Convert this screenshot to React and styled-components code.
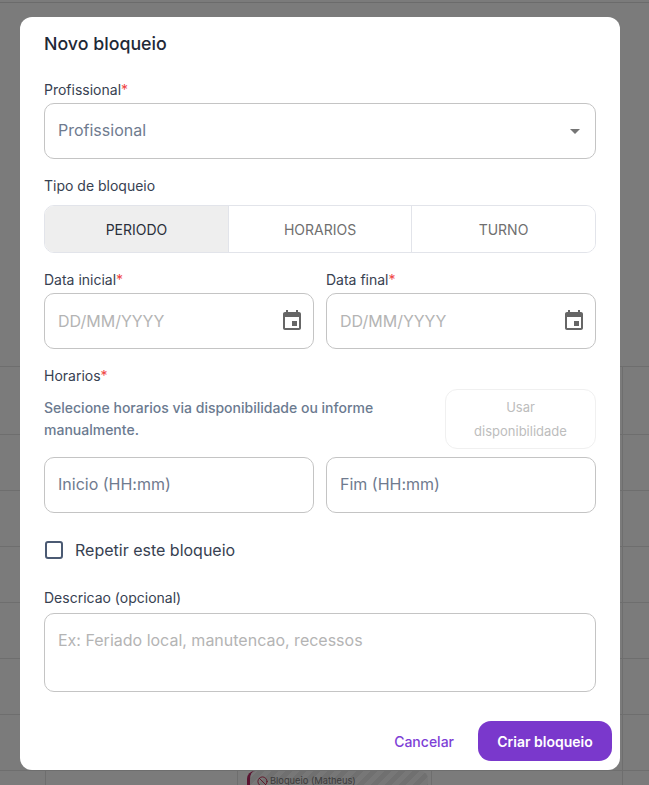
import React from 'react'
import styled, { createGlobalStyle } from 'styled-components'
import { Ban } from 'lucide-react'

const GlobalStyle = createGlobalStyle`
  html, body {
    margin: 0;
    height: 100%;
    overflow: hidden;
    font-family: Inter, "Liberation Sans", sans-serif;
    background: #f6f6f6;
  }
  * { box-sizing: border-box; }
`

const Page = styled.div`
  height: 785px;
  overflow: hidden;
`

const TopBar = styled.div`
  height: 366px;
  padding-top: 2px;
  &::before {
    content: '';
    display: block;
    height: 1px;
    background: #d6d6d6;
  }
`

const AgendaRow = styled.div`
  display: grid;
  grid-template-columns: 46px 192px 194px 191px 1fr;
  height: ${p => p.$height}px;
  border-top: 1px solid #dcdcdc;
`

const AgendaCell = styled.div`
  border-right: 1px solid #dcdcdc;
  padding: 0 3px 0 9px;
  &:last-child { border-right: 0; }
`

const BlockEvent = styled.div`
  display: flex;
  align-items: flex-start;
  gap: 2px;
  height: 40px;
  padding: 4px 0 0 7px;
  border-left: 3px solid #b3245f;
  border-radius: 8px;
  font-size: 9.3px;
  color: #777;
  background: repeating-linear-gradient(135deg, #eeeeee 0 5px, #e0e0e0 5px 10px);
  svg { color: #c0244a; flex: none; margin-top: 1px; }
`

const Overlay = styled.div`
  position: fixed;
  inset: 0;
  background: rgba(0, 0, 0, 0.5);
`

const Modal = styled.div`
  width: 600px;
  height: 753px;
  margin: 17px 0 0 20px;
  padding: 16px 24px 0;
  background: #fff;
  border-radius: 12px;
  display: flex;
  flex-direction: column;
`

const Title = styled.h2`
  margin: 0 0 25px;
  font-size: 17.8px;
  line-height: 22px;
  font-weight: 500;
  color: #1f2937;
`

const Label = styled.label`
  display: block;
  height: 20px;
  margin-bottom: ${p => p.$gap ?? 3}px;
  font-size: 14px;
  line-height: 20px;
  font-weight: 400;
  color: #374151;
  b { color: #ef4444; font-weight: 400; }
`

const Section = styled.div`
  margin-bottom: 17px;
`

const Box = styled.div`
  position: relative;
  display: flex;
  align-items: center;
  justify-content: space-between;
  height: 56px;
  padding: 0 9px 2px 13px;
  border: 1px solid #c4c4c4;
  border-radius: 10px;
  font-size: 16px;
  color: #6f7b8f;
`

const Caret = styled.span`
  width: 0;
  height: 0;
  margin: 2px 6px 0 0;
  border-left: 5px solid transparent;
  border-right: 5px solid transparent;
  border-top: 5px solid #757575;
`

const Field = styled.input`
  flex: 1;
  min-width: 0;
  border: 0;
  outline: 0;
  padding: ${p => p.$muted ? '2px' : '0'} 0 0;
  font: inherit;
  color: inherit;
  background: transparent;
  &::placeholder {
    color: ${p => p.$muted ? '#b4b4b4' : '#6f7b8f'};
    opacity: 1;
  }
`

const DateIcon = styled.svg`
  flex: none;
  margin-top: 2px;
`

const Toggle = styled.div`
  display: grid;
  grid-template-columns: 184px 183px 1fr;
  height: 48px;
  border: 1px solid #e2e4ea;
  border-radius: 10px;
  overflow: hidden;
`

const ToggleButton = styled.button`
  border: 0;
  border-right: 1px solid #e2e4ea;
  padding: 0;
  font-family: inherit;
  font-size: 14px;
  font-weight: 400;
  color: ${p => p.$active ? '#2a2f3a' : '#6f6f6f'};
  background: ${p => p.$active ? '#eeeeee' : '#fff'};
  &:last-child { border-right: 0; }
`

const TwoCols = styled.div`
  display: grid;
  grid-template-columns: 270px 270px;
  gap: 12px;
`

const HelpRow = styled.div`
  display: flex;
  justify-content: space-between;
  height: 60px;
  margin-bottom: 8px;
`

const HelpText = styled.p`
  width: 345px;
  margin: 0;
  padding-top: 8px;
  font-size: 14px;
  line-height: 22px;
  font-weight: 500;
  color: #6b7a90;
`

const GhostButton = styled.button`
  width: 151px;
  height: 60px;
  padding: 4px 16px;
  border: 1px solid #f0f0f0;
  border-radius: 12px;
  background: #fff;
  font-family: inherit;
  font-size: 13px;
  line-height: 24px;
  color: #bdbdbd;
`

const CheckRow = styled.label`
  display: flex;
  align-items: center;
  gap: 12px;
  height: 20px;
  margin: 27px 0 28px 1px;
  font-size: 16px;
  color: #374151;
`

const CheckBox = styled.input`
  appearance: none;
  width: 18px;
  height: 18px;
  margin: 0;
  border: 2px solid #4b5a73;
  border-radius: 3px;
`

const TextBox = styled.textarea`
  display: block;
  width: 100%;
  height: 79px;
  padding: 15px 13px;
  border: 1px solid #c4c4c4;
  border-radius: 10px;
  outline: 0;
  resize: none;
  font-family: inherit;
  font-size: 16px;
  line-height: 22px;
  &::placeholder { color: #b4b4b4; opacity: 1; }
`

const Actions = styled.div`
  display: flex;
  align-items: center;
  justify-content: flex-end;
  gap: 16px;
  margin: 29px -16px 0 0;
`

const TextButton = styled.button`
  padding: 0 8px;
  border: 0;
  background: none;
  font-family: inherit;
  font-size: 14px;
  font-weight: 500;
  color: #7e3fd6;
`

const PrimaryButton = styled.button`
  width: 134px;
  height: 40px;
  border: 0;
  border-radius: 13px;
  background: #7a38cc;
  font-family: inherit;
  font-size: 14px;
  font-weight: 600;
  color: #fff;
`

const CalendarIcon = () => (
  <DateIcon width="24" height="24" viewBox="0 0 24 24" fill="#666">
    <path d="M17 12h-5v5h5v-5zM16 1v2H8V1H6v2H5c-1.11 0-1.99.9-1.99 2L3 19c0 1.1.89 2 2 2h14c1.1 0 2-.9 2-2V5c0-1.1-.9-2-2-2h-1V1h-2zm3 18H5V8h14v11z" />
  </DateIcon>
)

const rowHeights = [68, 56, 56, 56, 56, 56, 56]

function DateField({ label }) {
  return (
    <div>
      <Label>{label}<b>*</b></Label>
      <Box>
        <Field $muted placeholder="DD/MM/YYYY" />
        <CalendarIcon />
      </Box>
    </div>
  )
}

export default function App() {
  return (
    <>
      <GlobalStyle />
      <Page>
        <TopBar />
        {rowHeights.map((h, i) => (
          <AgendaRow key={i} $height={h}>
            <AgendaCell /><AgendaCell /><AgendaCell /><AgendaCell /><AgendaCell />
          </AgendaRow>
        ))}
        <AgendaRow $height={56}>
          <AgendaCell />
          <AgendaCell />
          <AgendaCell>
            <BlockEvent>
              <Ban size={11} />
              Bloqueio (Matheus)
            </BlockEvent>
          </AgendaCell>
          <AgendaCell />
          <AgendaCell />
        </AgendaRow>
      </Page>

      <Overlay>
        <Modal>
          <Title>Novo bloqueio</Title>

          <Section>
            <Label>Profissional<b>*</b></Label>
            <Box>
              Profissional
              <Caret />
            </Box>
          </Section>

          <Section>
            <Label $gap={9}>Tipo de bloqueio</Label>
            <Toggle>
              <ToggleButton $active>PERIODO</ToggleButton>
              <ToggleButton>HORARIOS</ToggleButton>
              <ToggleButton>TURNO</ToggleButton>
            </Toggle>
          </Section>

          <Section>
            <TwoCols>
              <DateField label="Data inicial" />
              <DateField label="Data final" />
            </TwoCols>
          </Section>

          <Label>Horarios<b>*</b></Label>
          <HelpRow>
            <HelpText>Selecione horarios via disponibilidade ou informe manualmente.</HelpText>
            <GhostButton disabled>Usar disponibilidade</GhostButton>
          </HelpRow>
          <TwoCols>
            <Box><Field placeholder="Inicio (HH:mm)" /></Box>
            <Box><Field placeholder="Fim (HH:mm)" /></Box>
          </TwoCols>

          <CheckRow>
            <CheckBox type="checkbox" />
            Repetir este bloqueio
          </CheckRow>

          <Label $gap={5}>Descricao (opcional)</Label>
          <TextBox placeholder="Ex: Feriado local, manutencao, recessos" />

          <Actions>
            <TextButton>Cancelar</TextButton>
            <PrimaryButton>Criar bloqueio</PrimaryButton>
          </Actions>
        </Modal>
      </Overlay>
    </>
  )
}
